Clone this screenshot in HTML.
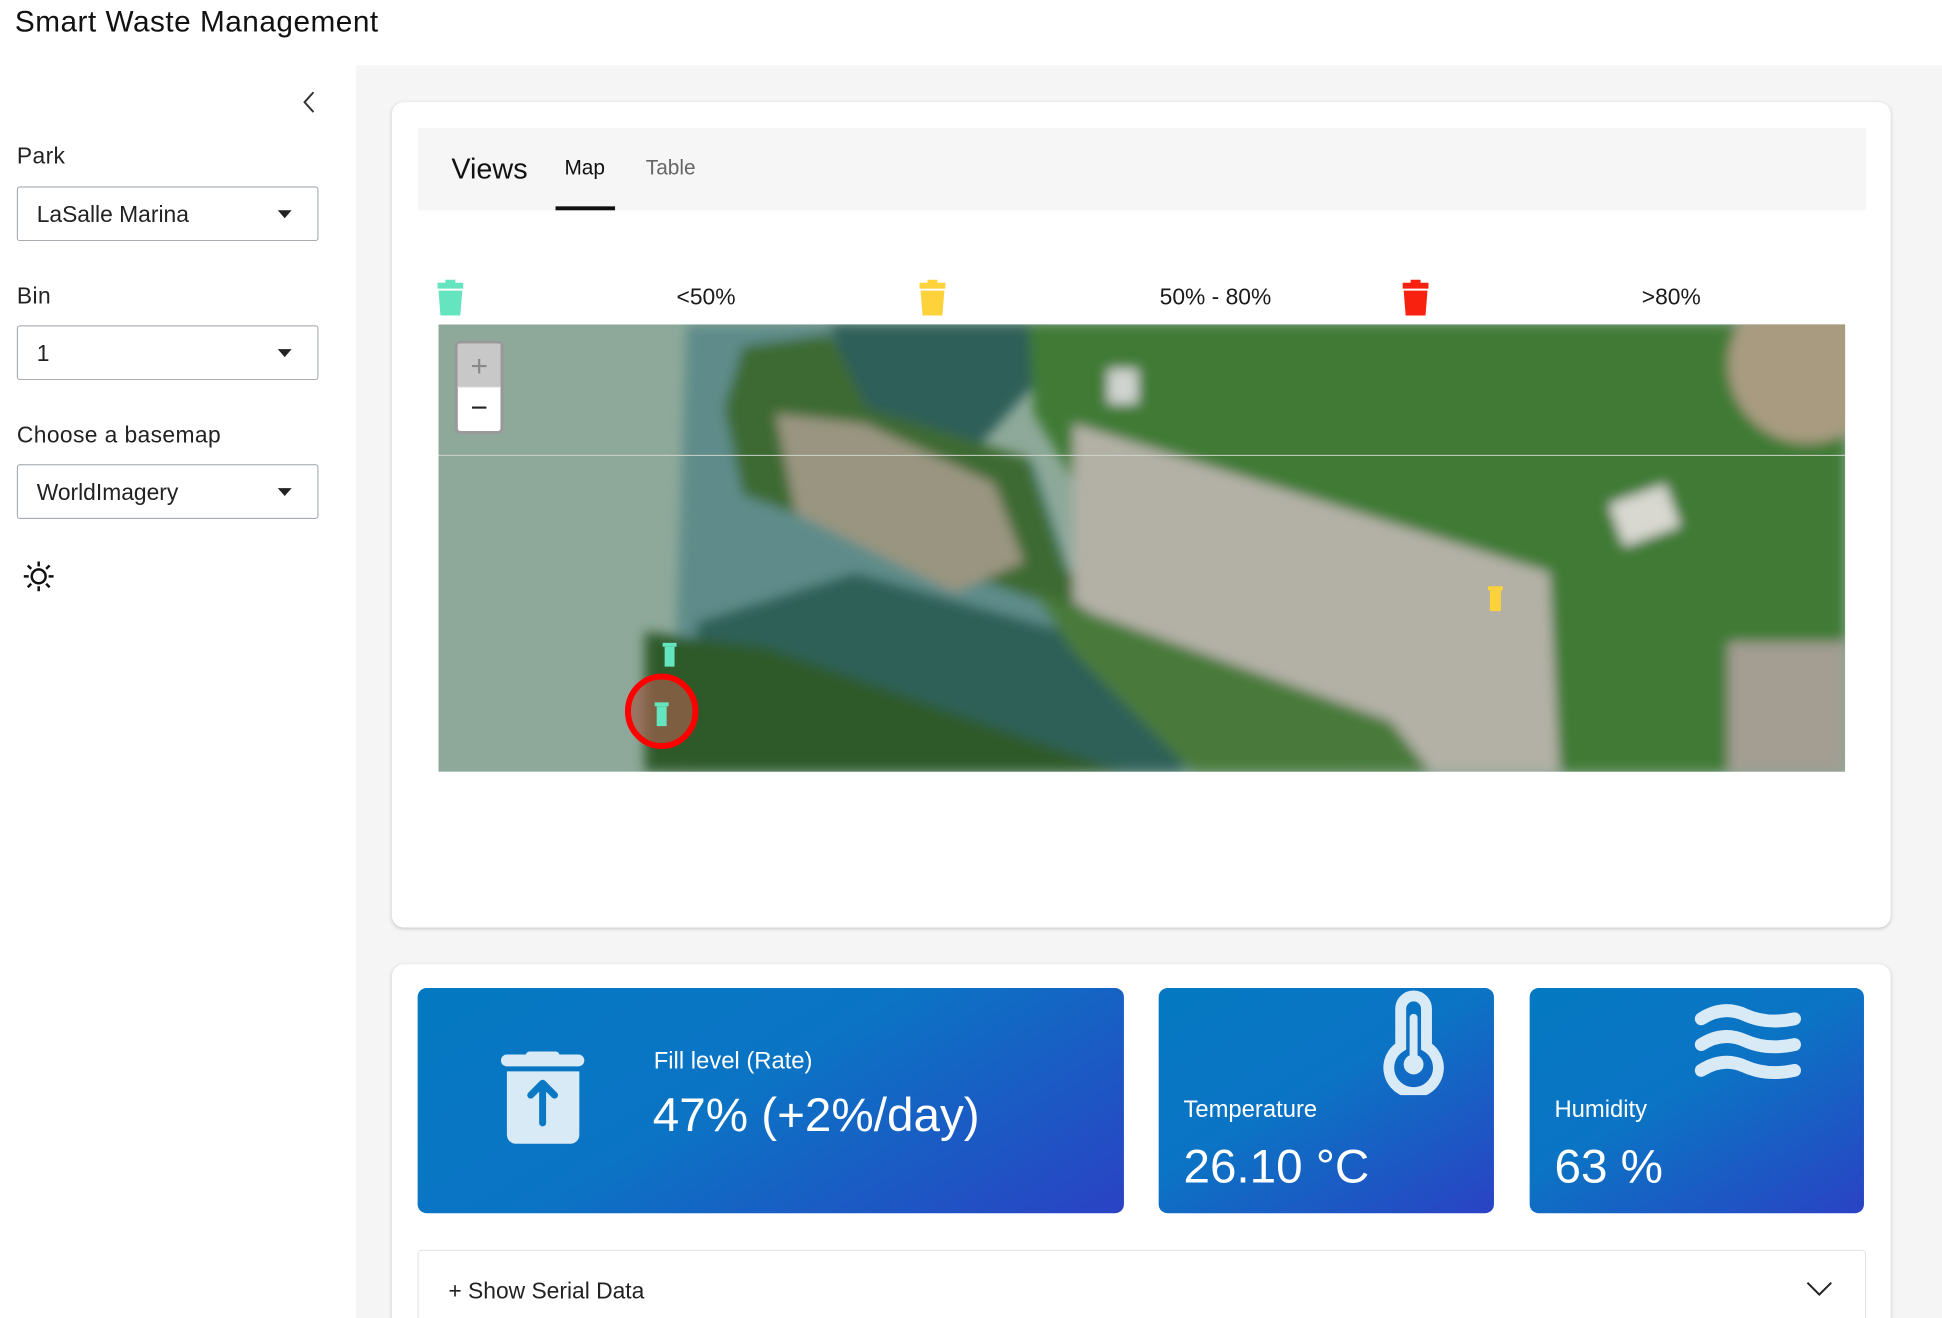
<!DOCTYPE html>
<html><head><meta charset="utf-8">
<style>
*{box-sizing:border-box;margin:0;padding:0}
html,body{width:1942px;height:1318px;overflow:hidden}
body{background:#fff;font-family:"Liberation Sans",sans-serif;color:#1a1a1a;position:relative}
#w{position:absolute;left:0;top:0;width:1958px;height:1330px;transform:scale(0.992);transform-origin:0 0;overflow:hidden}
.abs{position:absolute}
.sel{position:absolute;left:17px;width:304px;height:55px;border:1.5px solid #9aa0a6;border-radius:3px;font-size:23px;padding-left:19px;line-height:54px;color:#222}
.sel:after{content:"";position:absolute;right:26px;top:23px;border-left:7px solid transparent;border-right:7px solid transparent;border-top:8px solid #222}
.lbl{position:absolute;left:17px;font-size:23px;color:#222;letter-spacing:.4px}
.card{position:absolute;left:395px;width:1511px;background:#fff;border-radius:12px;box-shadow:0 1px 4px rgba(0,0,0,.18)}
.tile{position:absolute;top:996px;height:227px;border-radius:9px;background:linear-gradient(150deg,#0479c2 0%,#0b74c4 45%,#2a42c4 100%);color:#fff}
</style></head><body><div id="w">
<div class="abs" style="left:15px;top:6px;font-size:30px;color:#111;letter-spacing:.5px">Smart Waste Management</div>
<div class="abs" style="left:359px;top:66px;width:1600px;height:1300px;background:#f5f5f5"></div>
<svg class="abs" style="left:300px;top:90px" width="22" height="26"><path d="M16 3 L7 13 L16 23" fill="none" stroke="#333" stroke-width="2"/></svg>
<div class="lbl" style="top:144px">Park</div>
<div class="sel" style="top:188px">LaSalle Marina</div>
<div class="lbl" style="top:285px">Bin</div>
<div class="sel" style="top:328px">1</div>
<div class="lbl" style="top:425px">Choose a basemap</div>
<div class="sel" style="top:468px">WorldImagery</div>
<svg class="abs" style="left:22px;top:564px" width="34" height="34" viewBox="0 0 34 34"><circle cx="17" cy="17" r="7" fill="none" stroke="#111" stroke-width="2.5"/><g stroke="#111" stroke-width="2.5"><path d="M17 2v5M17 27v5M2 17h5M27 17h5M6 6l3.5 3.5M24.5 24.5L28 28M6 28l3.5-3.5M24.5 9.5L28 6"/></g></svg>

<div class="card" style="top:103px;height:832px"></div>
<div class="abs" style="left:421px;top:129px;width:1460px;height:83px;background:#f6f6f6"></div>
<div class="abs" style="left:455px;top:155px;font-size:29px;color:#111">Views</div>
<div class="abs" style="left:569px;top:158px;font-size:21px;color:#111">Map</div>
<div class="abs" style="left:560px;top:208px;width:60px;height:4px;background:#111"></div>
<div class="abs" style="left:651px;top:158px;font-size:21px;color:#666">Table</div>

<svg class="abs" style="left:438px;top:281px" width="32" height="38" viewBox="0 0 32 38"><path d="M11 1h10v3h8v6H3V4h8z" fill="#64e4bf"/><path d="M4 12h24l-2 25H6z" fill="#64e4bf"/></svg>
<svg class="abs" style="left:924px;top:281px" width="32" height="38" viewBox="0 0 32 38"><path d="M11 1h10v3h8v6H3V4h8z" fill="#fdd23a"/><path d="M4 12h24l-2 25H6z" fill="#fdd23a"/></svg>
<svg class="abs" style="left:1411px;top:281px" width="32" height="38" viewBox="0 0 32 38"><path d="M11 1h10v3h8v6H3V4h8z" fill="#f8200f"/><path d="M4 12h24l-2 25H6z" fill="#f8200f"/></svg>
<div class="abs" style="left:682px;top:286px;font-size:23px">&lt;50%</div>
<div class="abs" style="left:1169px;top:286px;font-size:23px">50% - 80%</div>
<div class="abs" style="left:1655px;top:286px;font-size:23px">&gt;80%</div>

<svg class="abs" style="left:442px;top:327px" width="1418" height="451" viewBox="0 0 1418 451">
<defs><filter id="b"><feGaussianBlur stdDeviation="6"/></filter></defs>
<rect width="1418" height="451" fill="#8ea99a"/>
<g filter="url(#b)">
<polygon points="250,0 420,0 440,90 600,140 640,260 760,330 760,451 250,451 240,300" fill="#5f8c8a"/>
<polygon points="395,0 600,0 610,50 520,150 420,90" fill="#2f5e58"/>
<polygon points="420,250 760,345 750,451 260,451 260,300" fill="#2f6058"/>
<polygon points="595,0 1418,0 1418,451 1120,451 690,240 600,90" fill="#3f7a36"/>
<polygon points="307,22 395,10 432,85 595,135 632,247 757,322 757,347 657,297 307,172 288,85" fill="#3d6b33"/>
<polygon points="340,90 430,100 560,160 590,240 520,270 360,190" fill="#9a9580"/>
<polygon points="640,100 1120,250 1130,451 930,451 640,280" fill="#b3b1a6"/>
<polygon points="600,270 960,400 1000,451 760,451 640,330" fill="#4a7a3a"/>
<polygon points="208,310 330,325 690,451 208,451" fill="#2d5a2c"/>
<rect x="1300" y="320" width="118" height="131" fill="#a39d92"/>
<ellipse cx="1380" cy="40" rx="80" ry="80" fill="#a89b80"/>
<rect x="1185" y="170" width="60" height="45" fill="#d8d8d0" transform="rotate(-20 1215 190)"/>
<rect x="675" y="45" width="30" height="35" fill="#d0d4d0"/>
</g>
<line x1="0" y1="132" x2="1418" y2="132" stroke="#cfd4cc" stroke-width="1"/>
<ellipse cx="225" cy="390" rx="34" ry="35" fill="#a0604c" opacity=".7"/>
<ellipse cx="225" cy="390" rx="34" ry="35" fill="none" stroke="#f00" stroke-width="6"/>
<g fill="#64e4bf"><rect x="228" y="325" width="10" height="20"/><rect x="226" y="321" width="14" height="4"/><rect x="220" y="385" width="10" height="20"/><rect x="218" y="381" width="14" height="4"/></g>
<g fill="#fdd23a"><rect x="1060" y="268" width="11" height="21"/><rect x="1058" y="264" width="15" height="4"/></g>
<rect x="18" y="18" width="46" height="91" rx="4" fill="#fff" stroke="#999" stroke-width="3"/>
<rect x="19.5" y="19.5" width="43" height="43" fill="#c8c8c8"/>
<line x1="19" y1="63" x2="63" y2="63" stroke="#ccc"/>
<text x="41" y="52" font-family="Liberation Sans" font-size="30" fill="#888" text-anchor="middle">+</text>
<text x="41" y="94" font-family="Liberation Sans" font-size="30" fill="#222" text-anchor="middle">−</text>
</svg>

<div class="card" style="top:972px;height:400px"></div>
<div class="tile" style="left:421px;width:712px">
<svg class="abs" style="left:84px;top:64px" width="90" height="96" viewBox="0 0 90 96"><rect x="0" y="3" width="84" height="12" rx="6" fill="#d9eaf7"/><rect x="25" y="0" width="34" height="8" rx="4" fill="#d9eaf7"/><path d="M6 20h73v64a9 9 0 0 1-9 9H15a9 9 0 0 1-9-9z" fill="#d9eaf7"/><path d="M42 72V32M30 44l12-12 12 12" fill="none" stroke="#0a78c3" stroke-width="7" stroke-linecap="round" stroke-linejoin="round"/></svg>
<div class="abs" style="left:238px;top:60px;font-size:24px">Fill level (Rate)</div>
<div class="abs" style="left:237px;top:101px;font-size:48px">47% (+2%/day)</div>
</div>
<div class="tile" style="left:1168px;width:338px">
<svg class="abs" style="left:221px;top:2px" width="72" height="106" viewBox="0 0 72 106"><path d="M23 57V19a12 12 0 0 1 26 0v38a25 25 0 1 1-26 0z" fill="none" stroke="#d9eaf7" stroke-width="11"/><circle cx="36" cy="75" r="10" fill="#d9eaf7"/><rect x="32" y="24" width="8" height="48" rx="4" fill="#d9eaf7"/></svg>
<div class="abs" style="left:25px;top:109px;font-size:24px">Temperature</div>
<div class="abs" style="left:25px;top:153px;font-size:48px">26.10 °C</div>
</div>
<div class="tile" style="left:1542px;width:337px">
<svg class="abs" style="left:165px;top:12px" width="115" height="80" viewBox="0 0 115 80"><g fill="none" stroke="#d9eaf7" stroke-width="13" stroke-linecap="round"><path d="M8 19Q30 5 52 15T102 19"/><path d="M8 45Q30 31 52 41T102 45"/><path d="M8 71Q30 57 52 67T102 71"/></g></svg>
<div class="abs" style="left:25px;top:109px;font-size:24px">Humidity</div>
<div class="abs" style="left:25px;top:153px;font-size:48px">63 %</div>
</div>

<div class="abs" style="left:421px;top:1260px;width:1460px;height:90px;border:1px solid #e2e2e2;border-radius:4px;background:#fff"></div>
<div class="abs" style="left:452px;top:1288px;font-size:23px;color:#222">+ Show Serial Data</div>
<svg class="abs" style="left:1820px;top:1290px" width="28" height="18"><path d="M2 3l12 12 12-12" fill="none" stroke="#222" stroke-width="2"/></svg>
</div></body></html>
